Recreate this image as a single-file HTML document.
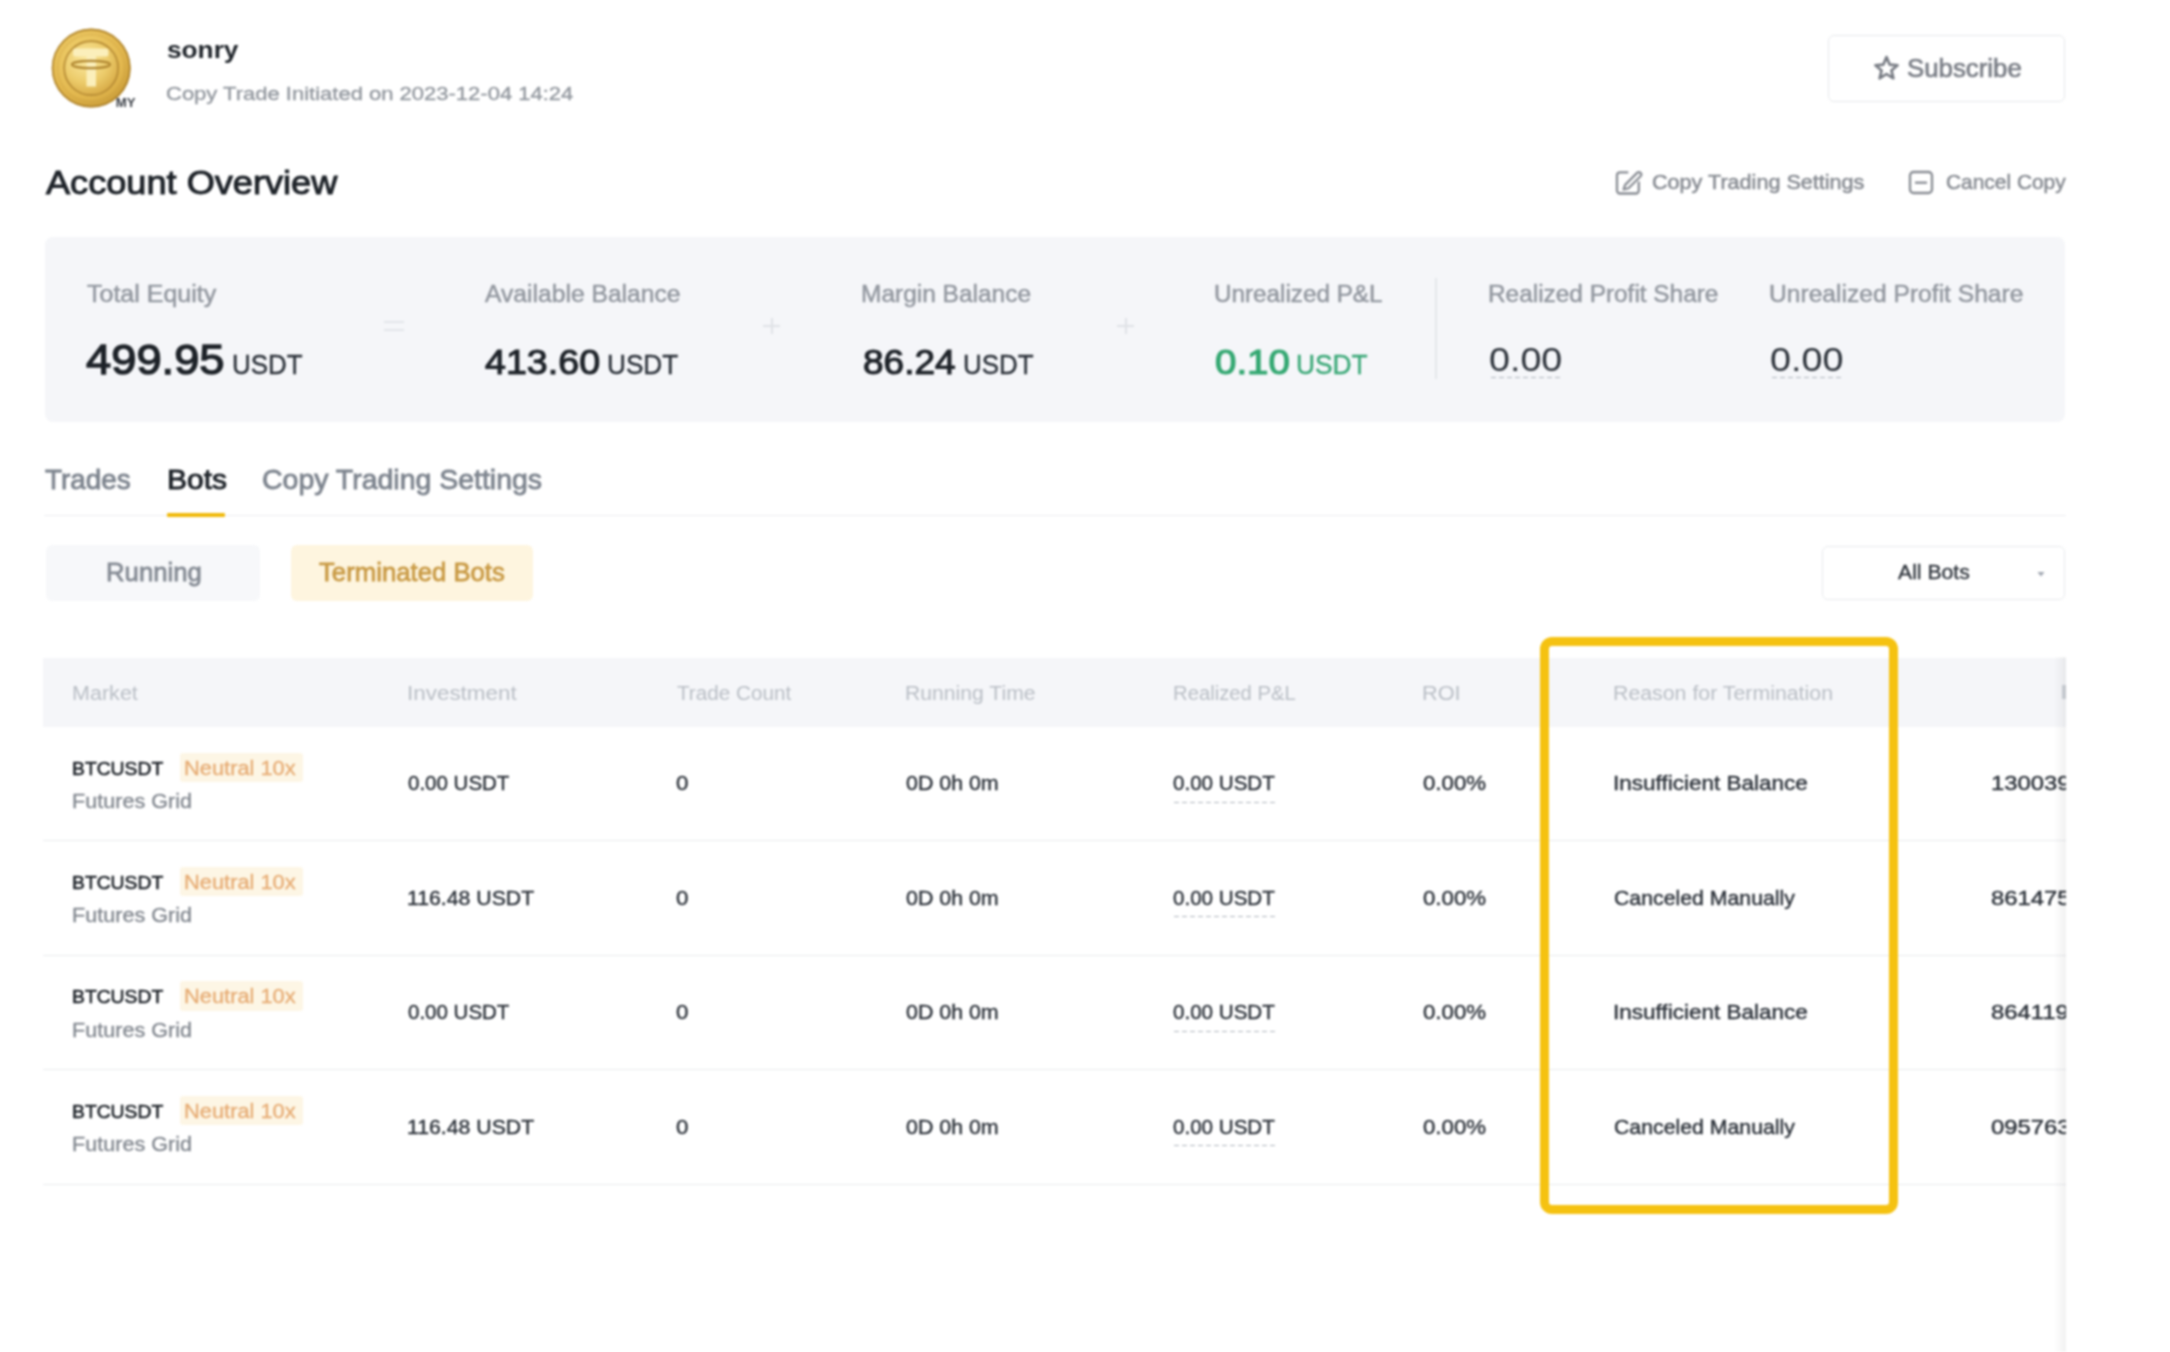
<!DOCTYPE html>
<html><head><meta charset="utf-8"><title>Copy Trading</title>
<style>
html,body{margin:0;padding:0;background:#fff;width:2170px;height:1352px;overflow:hidden;}
body{position:relative;font-family:"Liberation Sans",sans-serif;}
.t{position:absolute;white-space:pre;transform-origin:0 0;}
.a{position:absolute;}
</style></head><body>
<div class=a style="left:0;top:0;width:2170px;height:1352px;filter:blur(1px)">
<!-- avatar -->
<svg class=a style="left:48px;top:25px" width="92" height="88" viewBox="0 0 92 88">
<defs>
<radialGradient id="g1" cx="42%" cy="38%" r="68%"><stop offset="0" stop-color="#f5d978"/><stop offset="0.7" stop-color="#e2b74e"/><stop offset="1" stop-color="#c39532"/></radialGradient>
<radialGradient id="g2" cx="40%" cy="35%" r="70%"><stop offset="0" stop-color="#fbe9a0"/><stop offset="0.6" stop-color="#eccb6a"/><stop offset="1" stop-color="#d6a843"/></radialGradient>
</defs>
<circle cx="43.2" cy="43.1" r="39.5" fill="url(#g1)"/>
<circle cx="43.2" cy="43.1" r="38.6" fill="none" stroke="#a57b28" stroke-width="1.8" opacity="0.75"/>
<circle cx="43.2" cy="43.1" r="33.5" fill="none" stroke="#c79b3e" stroke-width="1.2" stroke-dasharray="2 1.5" opacity="0.6"/>
<circle cx="43.2" cy="43.1" r="27" fill="url(#g2)" stroke="#b58a34" stroke-width="1.6"/>
<path d="M27 23.5 h31.5 a2 2 0 0 1 2 2 v4 a2 2 0 0 1 -2 2 h-10.5 v30 h-9.5 v-30 h-11.5 a2 2 0 0 1 -2 -2 v-4 a2 2 0 0 1 2 -2 z" fill="#fbefbb"/>
<ellipse cx="43" cy="39.5" rx="19" ry="3.6" fill="none" stroke="#b08630" stroke-width="2.2"/>
<circle cx="80.5" cy="79.5" r="11.5" fill="#fff"/>
<text x="67.8" y="81.5" font-family="Liberation Sans" font-weight="700" font-size="13.2" fill="#3a3f46">MY</text>
</svg>

<!-- subscribe button -->
<div class=a style="left:1828px;top:35px;width:235px;height:65px;border:1px solid #e6e8eb;border-radius:6px"></div>
<svg class=a style="left:1872px;top:54px" width="29" height="28" viewBox="0 0 29 28">
<path d="M14.5 3 L17.6 10.6 L25.6 11.2 L19.4 16.4 L21.4 24.3 L14.5 20 L7.6 24.3 L9.6 16.4 L3.4 11.2 L11.4 10.6 Z" fill="none" stroke="#767a82" stroke-width="2.6" stroke-linejoin="round"/>
</svg>

<!-- edit icon -->
<svg class=a style="left:1614px;top:168px" width="30" height="29" viewBox="0 0 30 29">
<path d="M14.3 4.3 H6 a3 3 0 0 0 -3 3 V22.5 a3 3 0 0 0 3 3 H21.8 a3 3 0 0 0 3 -3 V13.5" fill="none" stroke="#888c93" stroke-width="2.3"/>
<path d="M23.1 4.9 A2.4 2.4 0 0 1 26.5 8.3 L14.5 20.3 L9.6 21.4 L11.1 16.9 Z" fill="none" stroke="#888c93" stroke-width="2.2" stroke-linejoin="round"/>
</svg>

<!-- cancel icon -->
<svg class=a style="left:1907px;top:169px" width="28" height="27" viewBox="0 0 28 27">
<rect x="3" y="3" width="22" height="21" rx="3.5" fill="none" stroke="#888c93" stroke-width="2.3"/>
<path d="M8 13.7 H20" stroke="#888c93" stroke-width="2.3"/>
</svg>

<!-- overview box -->
<div class=a style="left:45px;top:237px;width:2020px;height:185px;background:#f5f6f9;border-radius:8px"></div>
<div class=a style="left:384px;top:321px;width:20px;height:2px;background:#e2e5e9"></div>
<div class=a style="left:384px;top:329px;width:20px;height:2px;background:#e2e5e9"></div>
<div class=a style="left:763px;top:325px;width:17px;height:2px;background:#dfe2e6"></div>
<div class=a style="left:770.5px;top:318px;width:2px;height:16px;background:#dfe2e6"></div>
<div class=a style="left:1117px;top:325px;width:17px;height:2px;background:#dfe2e6"></div>
<div class=a style="left:1124.5px;top:318px;width:2px;height:16px;background:#dfe2e6"></div>
<div class=a style="left:1435px;top:278px;width:2px;height:101px;background:#e4e6ea"></div>
<div class=a style="left:1491px;top:377px;width:71px;height:1px;background:repeating-linear-gradient(to right,#aeb4bc 0 5px,transparent 5px 8px)"></div>
<div class=a style="left:1772px;top:377px;width:71px;height:1px;background:repeating-linear-gradient(to right,#aeb4bc 0 5px,transparent 5px 8px)"></div>

<!-- tabs -->
<div class=a style="left:44px;top:515px;width:2022px;height:1px;background:#eceef1"></div>
<div class=a style="left:167px;top:513px;width:58px;height:4px;background:#f0b90b;border-radius:1px"></div>

<!-- running / terminated -->
<div class=a style="left:46px;top:545px;width:214px;height:56px;background:#f7f8fa;border-radius:6px"></div>
<div class=a style="left:291px;top:545px;width:242px;height:56px;background:#fef5df;border-radius:6px"></div>

<!-- all bots dropdown -->
<div class=a style="left:1822px;top:546px;width:241px;height:52px;border:1px solid #e8eaed;border-radius:6px"></div>
<svg class=a style="left:2036px;top:570px" width="10" height="8" viewBox="0 0 10 8"><path d="M1.5 2 L8.5 2 L5 6.5 Z" fill="#a0a6b0"/></svg>

<!-- table header -->
<div class=a style="left:43px;top:658px;width:2023px;height:69px;background:#f5f6f9"></div>
<div class=a style="left:2062px;top:685px;width:4px;height:14px;background:#cdd1d7"></div>
<!-- row borders -->
<div class=a style="left:43px;top:840px;width:2023px;height:1px;background:#e9ebee"></div>
<div class=a style="left:43px;top:954.5px;width:2023px;height:1px;background:#e9ebee"></div>
<div class=a style="left:43px;top:1069.2px;width:2023px;height:1px;background:#e9ebee"></div>
<div class=a style="left:43px;top:1184px;width:2023px;height:1px;background:#e9ebee"></div>
<!-- tags -->
<div class=a style="left:180px;top:752.6px;width:123px;height:29.3px;background:#fdf6e5;border-radius:3px"></div>
<div class=a style="left:180px;top:867.0px;width:123px;height:29.3px;background:#fdf6e5;border-radius:3px"></div>
<div class=a style="left:180px;top:981.4px;width:123px;height:29.3px;background:#fdf6e5;border-radius:3px"></div>
<div class=a style="left:180px;top:1095.8px;width:123px;height:29.3px;background:#fdf6e5;border-radius:3px"></div>
<!-- pnl dashed underline -->
<div class=a style="left:1174px;top:802.0px;width:102px;height:1px;background:repeating-linear-gradient(to right,#aeb4bc 0 5px,transparent 5px 8px)"></div>
<div class=a style="left:1174px;top:916.4px;width:102px;height:1px;background:repeating-linear-gradient(to right,#aeb4bc 0 5px,transparent 5px 8px)"></div>
<div class=a style="left:1174px;top:1030.8px;width:102px;height:1px;background:repeating-linear-gradient(to right,#aeb4bc 0 5px,transparent 5px 8px)"></div>
<div class=a style="left:1174px;top:1145.2px;width:102px;height:1px;background:repeating-linear-gradient(to right,#aeb4bc 0 5px,transparent 5px 8px)"></div>

<!-- yellow highlight -->
<div class=a style="left:1540px;top:636.5px;width:340px;height:559.4px;border:9px solid #f5c211;border-radius:12px;z-index:5"></div>

<div class=a style="left:0;top:0;width:2066px;height:1352px;overflow:hidden">
<div class=t style="left:167.05px;top:39.29px;font-size:23.21px;line-height:23.21px;font-weight:700;color:#1e2329;transform:scaleX(1.1303);">sonry</div>
<div class=t style="left:166.20px;top:83.91px;font-size:19.28px;line-height:19.28px;font-weight:400;color:#92979e;transform:scaleX(1.1420);-webkit-text-stroke:0.35px #92979e;">Copy Trade Initiated on 2023-12-04 14:24</div>
<div class=t style="left:1906.81px;top:55.99px;font-size:25.22px;line-height:25.22px;font-weight:400;color:#7a7e86;transform:scaleX(1.0237);-webkit-text-stroke:0.66px #7a7e86;">Subscribe</div>
<div class=t style="left:1652.42px;top:172.31px;font-size:20.58px;line-height:20.58px;font-weight:400;color:#878b92;transform:scaleX(1.0491);-webkit-text-stroke:0.54px #878b92;">Copy Trading Settings</div>
<div class=t style="left:1945.95px;top:172.16px;font-size:20.29px;line-height:20.29px;font-weight:400;color:#878b92;transform:scaleX(1.0309);-webkit-text-stroke:0.53px #878b92;">Cancel Copy</div>
<div class=t style="left:45.70px;top:166.75px;font-size:32.61px;line-height:32.61px;font-weight:400;color:#1e2329;transform:scaleX(1.1083);-webkit-text-stroke:0.98px #1e2329;">Account Overview</div>
<div class=t style="left:86.60px;top:281.52px;font-size:23.77px;line-height:23.77px;font-weight:400;color:#92979f;transform:scaleX(1.0522);-webkit-text-stroke:0.48px #92979f;">Total Equity</div>
<div class=t style="left:484.80px;top:281.52px;font-size:23.77px;line-height:23.77px;font-weight:400;color:#92979f;transform:scaleX(1.0372);-webkit-text-stroke:0.48px #92979f;">Available Balance</div>
<div class=t style="left:861.44px;top:281.52px;font-size:23.77px;line-height:23.77px;font-weight:400;color:#92979f;transform:scaleX(1.0296);-webkit-text-stroke:0.48px #92979f;">Margin Balance</div>
<div class=t style="left:1214.46px;top:281.52px;font-size:23.77px;line-height:23.77px;font-weight:400;color:#92979f;transform:scaleX(1.0205);-webkit-text-stroke:0.48px #92979f;">Unrealized P&amp;L</div>
<div class=t style="left:1488.45px;top:281.52px;font-size:23.77px;line-height:23.77px;font-weight:400;color:#92979f;transform:scaleX(1.0261);-webkit-text-stroke:0.48px #92979f;">Realized Profit Share</div>
<div class=t style="left:1769.43px;top:281.52px;font-size:23.77px;line-height:23.77px;font-weight:400;color:#92979f;transform:scaleX(1.0356);-webkit-text-stroke:0.48px #92979f;">Unrealized Profit Share</div>
<div class=t style="left:86.39px;top:337.80px;font-size:42.61px;line-height:42.61px;font-weight:400;color:#1e2329;transform:scaleX(1.0632);-webkit-text-stroke:1.36px #1e2329;">499.95</div>
<div class=t style="left:485.35px;top:344.16px;font-size:35.07px;line-height:35.07px;font-weight:400;color:#1e2329;transform:scaleX(1.0730);-webkit-text-stroke:1.12px #1e2329;">413.60</div>
<div class=t style="left:862.52px;top:344.16px;font-size:35.07px;line-height:35.07px;font-weight:400;color:#1e2329;transform:scaleX(1.0560);-webkit-text-stroke:1.12px #1e2329;">86.24</div>
<div class=t style="left:1215.46px;top:344.16px;font-size:35.07px;line-height:35.07px;font-weight:400;color:#34a872;transform:scaleX(1.0978);-webkit-text-stroke:1.12px #34a872;">0.10</div>
<div class=t style="left:231.52px;top:350.53px;font-size:27.54px;line-height:27.54px;font-weight:400;color:#2b3139;transform:scaleX(0.9425);-webkit-text-stroke:0.41px #2b3139;">USDT</div>
<div class=t style="left:606.71px;top:350.53px;font-size:27.54px;line-height:27.54px;font-weight:400;color:#2b3139;transform:scaleX(0.9509);-webkit-text-stroke:0.41px #2b3139;">USDT</div>
<div class=t style="left:962.92px;top:350.53px;font-size:27.54px;line-height:27.54px;font-weight:400;color:#2b3139;transform:scaleX(0.9425);-webkit-text-stroke:0.41px #2b3139;">USDT</div>
<div class=t style="left:1295.89px;top:350.53px;font-size:27.54px;line-height:27.54px;font-weight:400;color:#3aa877;transform:scaleX(0.9564);-webkit-text-stroke:0.41px #3aa877;">USDT</div>
<div class=t style="left:1489.49px;top:343.65px;font-size:32.61px;line-height:32.61px;font-weight:400;color:#2b3139;transform:scaleX(1.1545);">0.00</div>
<div class=t style="left:1770.49px;top:343.65px;font-size:32.61px;line-height:32.61px;font-weight:400;color:#2b3139;transform:scaleX(1.1561);">0.00</div>
<div class=t style="left:45.34px;top:464.60px;font-size:28.41px;line-height:28.41px;font-weight:400;color:#7d848e;transform:scaleX(0.9804);-webkit-text-stroke:0.85px #7d848e;">Trades</div>
<div class=t style="left:166.60px;top:464.60px;font-size:28.41px;line-height:28.41px;font-weight:400;color:#1e2329;transform:scaleX(1.0561);-webkit-text-stroke:0.91px #1e2329;">Bots</div>
<div class=t style="left:261.58px;top:464.60px;font-size:28.41px;line-height:28.41px;font-weight:400;color:#7d848e;transform:scaleX(1.0020);-webkit-text-stroke:0.85px #7d848e;">Copy Trading Settings</div>
<div class=t style="left:105.64px;top:560.25px;font-size:25.51px;line-height:25.51px;font-weight:400;color:#858b94;transform:scaleX(1.0086);-webkit-text-stroke:0.77px #858b94;">Running</div>
<div class=t style="left:318.89px;top:560.25px;font-size:25.51px;line-height:25.51px;font-weight:400;color:#c99a45;transform:scaleX(1.0088);-webkit-text-stroke:0.77px #c99a45;">Terminated Bots</div>
<div class=t style="left:1898.30px;top:562.29px;font-size:20.72px;line-height:20.72px;font-weight:400;color:#2b3139;transform:scaleX(1.0226);-webkit-text-stroke:0.31px #2b3139;">All Bots</div>
<div class=t style="left:71.78px;top:682.70px;font-size:20.00px;line-height:20.00px;font-weight:400;color:#b9bec5;transform:scaleX(1.0774);">Market</div>
<div class=t style="left:406.58px;top:682.70px;font-size:20.00px;line-height:20.00px;font-weight:400;color:#b9bec5;transform:scaleX(1.1211);">Investment</div>
<div class=t style="left:676.59px;top:682.70px;font-size:20.00px;line-height:20.00px;font-weight:400;color:#b9bec5;transform:scaleX(1.0337);">Trade Count</div>
<div class=t style="left:905.31px;top:682.70px;font-size:20.00px;line-height:20.00px;font-weight:400;color:#b9bec5;transform:scaleX(1.0579);">Running Time</div>
<div class=t style="left:1173.38px;top:682.70px;font-size:20.00px;line-height:20.00px;font-weight:400;color:#b9bec5;transform:scaleX(1.0126);">Realized P&amp;L</div>
<div class=t style="left:1421.86px;top:682.70px;font-size:20.00px;line-height:20.00px;font-weight:400;color:#b9bec5;transform:scaleX(1.0870);">ROI</div>
<div class=t style="left:1613.29px;top:682.70px;font-size:20.00px;line-height:20.00px;font-weight:400;color:#b9bec5;transform:scaleX(1.0658);">Reason for Termination</div>
<div class=t style="left:72.26px;top:758.66px;font-size:18.99px;line-height:18.99px;font-weight:400;color:#1e2329;transform:scaleX(1.0170);-webkit-text-stroke:0.61px #1e2329;">BTCUSDT</div>
<div class=t style="left:184.05px;top:758.52px;font-size:19.86px;line-height:19.86px;font-weight:400;color:#e6ab73;transform:scaleX(1.0996);-webkit-text-stroke:0.30px #e6ab73;">Neutral 10x</div>
<div class=t style="left:72.07px;top:790.80px;font-size:20.00px;line-height:20.00px;font-weight:400;color:#80868e;transform:scaleX(1.0795);-webkit-text-stroke:0.30px #80868e;">Futures Grid</div>
<div class=t style="left:407.78px;top:774.32px;font-size:19.86px;line-height:19.86px;font-weight:400;color:#2b3139;transform:scaleX(1.0321);-webkit-text-stroke:0.40px #2b3139;">0.00 USDT</div>
<div class=t style="left:675.71px;top:774.32px;font-size:19.86px;line-height:19.86px;font-weight:400;color:#2b3139;transform:scaleX(1.1227);-webkit-text-stroke:0.40px #2b3139;">0</div>
<div class=t style="left:905.75px;top:774.32px;font-size:19.86px;line-height:19.86px;font-weight:400;color:#2b3139;transform:scaleX(1.0764);-webkit-text-stroke:0.40px #2b3139;">0D 0h 0m</div>
<div class=t style="left:1173.08px;top:774.32px;font-size:19.86px;line-height:19.86px;font-weight:400;color:#2b3139;transform:scaleX(1.0362);-webkit-text-stroke:0.40px #2b3139;">0.00 USDT</div>
<div class=t style="left:1423.01px;top:774.32px;font-size:19.86px;line-height:19.86px;font-weight:400;color:#2b3139;transform:scaleX(1.1186);-webkit-text-stroke:0.40px #2b3139;">0.00%</div>
<div class=t style="left:1612.97px;top:774.32px;font-size:19.86px;line-height:19.86px;font-weight:400;color:#2b3139;transform:scaleX(1.1332);-webkit-text-stroke:0.40px #2b3139;">Insufficient Balance</div>
<div class=t style="left:72.26px;top:873.06px;font-size:18.99px;line-height:18.99px;font-weight:400;color:#1e2329;transform:scaleX(1.0170);-webkit-text-stroke:0.61px #1e2329;">BTCUSDT</div>
<div class=t style="left:184.05px;top:872.92px;font-size:19.86px;line-height:19.86px;font-weight:400;color:#e6ab73;transform:scaleX(1.0996);-webkit-text-stroke:0.30px #e6ab73;">Neutral 10x</div>
<div class=t style="left:72.07px;top:905.20px;font-size:20.00px;line-height:20.00px;font-weight:400;color:#80868e;transform:scaleX(1.0795);-webkit-text-stroke:0.30px #80868e;">Futures Grid</div>
<div class=t style="left:406.90px;top:888.72px;font-size:19.86px;line-height:19.86px;font-weight:400;color:#2b3139;transform:scaleX(1.0698);-webkit-text-stroke:0.40px #2b3139;">116.48 USDT</div>
<div class=t style="left:675.71px;top:888.72px;font-size:19.86px;line-height:19.86px;font-weight:400;color:#2b3139;transform:scaleX(1.1227);-webkit-text-stroke:0.40px #2b3139;">0</div>
<div class=t style="left:905.75px;top:888.72px;font-size:19.86px;line-height:19.86px;font-weight:400;color:#2b3139;transform:scaleX(1.0764);-webkit-text-stroke:0.40px #2b3139;">0D 0h 0m</div>
<div class=t style="left:1173.08px;top:888.72px;font-size:19.86px;line-height:19.86px;font-weight:400;color:#2b3139;transform:scaleX(1.0362);-webkit-text-stroke:0.40px #2b3139;">0.00 USDT</div>
<div class=t style="left:1423.01px;top:888.72px;font-size:19.86px;line-height:19.86px;font-weight:400;color:#2b3139;transform:scaleX(1.1186);-webkit-text-stroke:0.40px #2b3139;">0.00%</div>
<div class=t style="left:1613.94px;top:888.72px;font-size:19.86px;line-height:19.86px;font-weight:400;color:#2b3139;transform:scaleX(1.0711);-webkit-text-stroke:0.40px #2b3139;">Canceled Manually</div>
<div class=t style="left:72.26px;top:987.46px;font-size:18.99px;line-height:18.99px;font-weight:400;color:#1e2329;transform:scaleX(1.0170);-webkit-text-stroke:0.61px #1e2329;">BTCUSDT</div>
<div class=t style="left:184.05px;top:987.32px;font-size:19.86px;line-height:19.86px;font-weight:400;color:#e6ab73;transform:scaleX(1.0996);-webkit-text-stroke:0.30px #e6ab73;">Neutral 10x</div>
<div class=t style="left:72.07px;top:1019.60px;font-size:20.00px;line-height:20.00px;font-weight:400;color:#80868e;transform:scaleX(1.0795);-webkit-text-stroke:0.30px #80868e;">Futures Grid</div>
<div class=t style="left:407.78px;top:1003.12px;font-size:19.86px;line-height:19.86px;font-weight:400;color:#2b3139;transform:scaleX(1.0321);-webkit-text-stroke:0.40px #2b3139;">0.00 USDT</div>
<div class=t style="left:675.71px;top:1003.12px;font-size:19.86px;line-height:19.86px;font-weight:400;color:#2b3139;transform:scaleX(1.1227);-webkit-text-stroke:0.40px #2b3139;">0</div>
<div class=t style="left:905.75px;top:1003.12px;font-size:19.86px;line-height:19.86px;font-weight:400;color:#2b3139;transform:scaleX(1.0764);-webkit-text-stroke:0.40px #2b3139;">0D 0h 0m</div>
<div class=t style="left:1173.08px;top:1003.12px;font-size:19.86px;line-height:19.86px;font-weight:400;color:#2b3139;transform:scaleX(1.0362);-webkit-text-stroke:0.40px #2b3139;">0.00 USDT</div>
<div class=t style="left:1423.01px;top:1003.12px;font-size:19.86px;line-height:19.86px;font-weight:400;color:#2b3139;transform:scaleX(1.1186);-webkit-text-stroke:0.40px #2b3139;">0.00%</div>
<div class=t style="left:1612.97px;top:1003.12px;font-size:19.86px;line-height:19.86px;font-weight:400;color:#2b3139;transform:scaleX(1.1332);-webkit-text-stroke:0.40px #2b3139;">Insufficient Balance</div>
<div class=t style="left:72.26px;top:1101.86px;font-size:18.99px;line-height:18.99px;font-weight:400;color:#1e2329;transform:scaleX(1.0170);-webkit-text-stroke:0.61px #1e2329;">BTCUSDT</div>
<div class=t style="left:184.05px;top:1101.72px;font-size:19.86px;line-height:19.86px;font-weight:400;color:#e6ab73;transform:scaleX(1.0996);-webkit-text-stroke:0.30px #e6ab73;">Neutral 10x</div>
<div class=t style="left:72.07px;top:1134.00px;font-size:20.00px;line-height:20.00px;font-weight:400;color:#80868e;transform:scaleX(1.0795);-webkit-text-stroke:0.30px #80868e;">Futures Grid</div>
<div class=t style="left:406.90px;top:1117.52px;font-size:19.86px;line-height:19.86px;font-weight:400;color:#2b3139;transform:scaleX(1.0698);-webkit-text-stroke:0.40px #2b3139;">116.48 USDT</div>
<div class=t style="left:675.71px;top:1117.52px;font-size:19.86px;line-height:19.86px;font-weight:400;color:#2b3139;transform:scaleX(1.1227);-webkit-text-stroke:0.40px #2b3139;">0</div>
<div class=t style="left:905.75px;top:1117.52px;font-size:19.86px;line-height:19.86px;font-weight:400;color:#2b3139;transform:scaleX(1.0764);-webkit-text-stroke:0.40px #2b3139;">0D 0h 0m</div>
<div class=t style="left:1173.08px;top:1117.52px;font-size:19.86px;line-height:19.86px;font-weight:400;color:#2b3139;transform:scaleX(1.0362);-webkit-text-stroke:0.40px #2b3139;">0.00 USDT</div>
<div class=t style="left:1423.01px;top:1117.52px;font-size:19.86px;line-height:19.86px;font-weight:400;color:#2b3139;transform:scaleX(1.1186);-webkit-text-stroke:0.40px #2b3139;">0.00%</div>
<div class=t style="left:1613.94px;top:1117.52px;font-size:19.86px;line-height:19.86px;font-weight:400;color:#2b3139;transform:scaleX(1.0711);-webkit-text-stroke:0.40px #2b3139;">Canceled Manually</div>
<div class=t style="left:1991.39px;top:774.32px;font-size:19.86px;line-height:19.86px;color:#2b3139;-webkit-text-stroke:0.4px #2b3139;transform:scaleX(1.2)">130039</div>
<div class=t style="left:1991.39px;top:888.72px;font-size:19.86px;line-height:19.86px;color:#2b3139;-webkit-text-stroke:0.4px #2b3139;transform:scaleX(1.2)">861475</div>
<div class=t style="left:1991.39px;top:1003.12px;font-size:19.86px;line-height:19.86px;color:#2b3139;-webkit-text-stroke:0.4px #2b3139;transform:scaleX(1.2)">864119</div>
<div class=t style="left:1991.39px;top:1117.52px;font-size:19.86px;line-height:19.86px;color:#2b3139;-webkit-text-stroke:0.4px #2b3139;transform:scaleX(1.2)">095763</div>

</div>
<div class=a style="left:2054px;top:657px;width:12px;height:695px;background:linear-gradient(to right,rgba(0,0,0,0),rgba(0,0,0,0.055))"></div>
</div>
</body></html>
